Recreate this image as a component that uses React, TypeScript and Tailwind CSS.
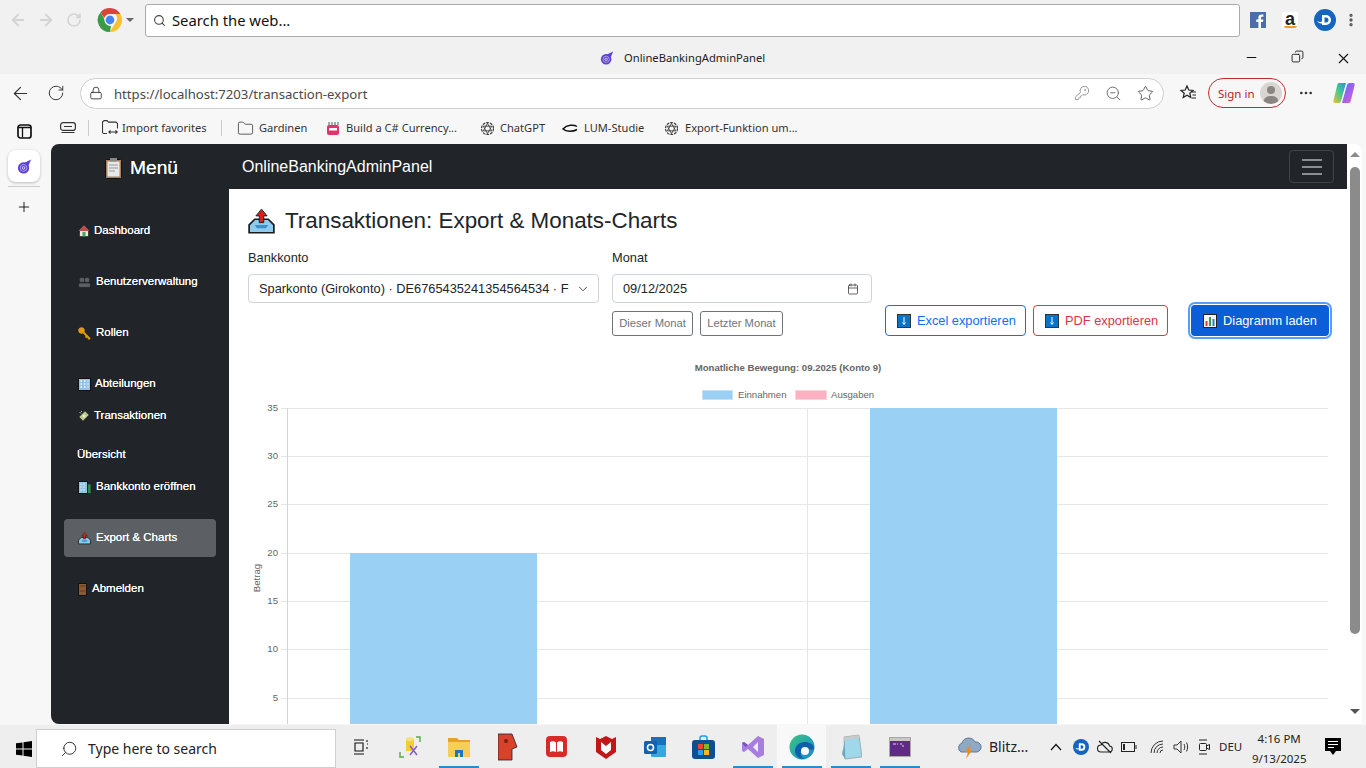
import {
  ArrowLeft,
  ArrowRight,
  Calendar,
  ChevronDown,
  Copy,
  Folder,
  KeyRound,
  Lock,
  Minus,
  MoreHorizontal,
  Plus,
  RotateCw,
  Search,
  Star,
  X,
  ZoomOut,
} from "lucide-react";
import type { ReactNode } from "react";

const segoe = "font-['Noto_Sans','Open_Sans',sans-serif]";

function ChromeLogo() {
  return (
    <svg width="26" height="26" viewBox="0 0 26 26">
      <path d="M13 1a12 12 0 0 1 10.4 6H13a6 6 0 0 0-5.7 4L3.6 5.2A12 12 0 0 1 13 1z" fill="#db4437" />
      <path d="M23.4 7A12 12 0 0 1 13 25l5.2-9a6 6 0 0 0 0-9z" fill="#fbc02d" />
      <path d="M13 25A12 12 0 0 1 3.6 5.2L8 13a6 6 0 0 0 6 6z" fill="#3c9a47" />
      <circle cx="13" cy="13" r="5.6" fill="#fff" />
      <circle cx="13" cy="13" r="4.4" fill="#4285f4" />
    </svg>
  );
}

function DashlaneLogo({ size }: { size: number }) {
  return (
    <svg width={size} height={size} viewBox="0 0 22 22">
      <circle cx="11" cy="11" r="11" fill="#1565c0" />
      <path d="M8 6h4a5 5 0 0 1 0 10H8z" fill="#fff" />
      <path d="M10.500 8.500h1.500a2.500 2.500 0 0 1 0 5h-1.500z" fill="#1565c0" />
      <path d="M3 12q3 1.500 5 .5v2q-3 .5-5-2.500z" fill="#fff" />
    </svg>
  );
}

function SwirlLogo({ size }: { size: number }) {
  return (
    <svg width={size} height={size} viewBox="0 0 16 16">
      <circle cx="7" cy="9.500" r="6" fill="#5b3fd6" />
      <path d="M8 4l7-3.500-3 7z" fill="#5b3fd6" />
      <circle cx="7" cy="9.500" r="3.600" fill="none" stroke="#c9bdf5" strokeWidth="0.800" />
      <circle cx="7" cy="9.500" r="1.400" fill="none" stroke="#fff" strokeWidth="0.800" />
    </svg>
  );
}

function CopilotLogo() {
  return (
    <svg width="24" height="24" viewBox="0 0 24 24">
      <defs>
        <linearGradient id="copA" x1="0" y1="1" x2="1" y2="0">
          <stop offset="0" stopColor="#f5c02e" />
          <stop offset="0.5" stopColor="#46c98c" />
          <stop offset="1" stopColor="#2b8ff0" />
        </linearGradient>
        <linearGradient id="copB" x1="0" y1="0" x2="1" y2="1">
          <stop offset="0" stopColor="#3f7df0" />
          <stop offset="0.6" stopColor="#b35ce8" />
          <stop offset="1" stopColor="#f06ba8" />
        </linearGradient>
      </defs>
      <path d="M7 2h7L9 20c-.5 1.500-1.500 2-3 2H3c-1.500 0-2-1-1.500-2.500L5 5c.4-2 1-3 2-3z" fill="url(#copA)" />
      <path d="M17 22h-7l5-18c.5-1.500 1.500-2 3-2h3c1.500 0 2 1 1.500 2.500L19 19c-.4 2-1 3-2 3z" fill="url(#copB)" />
    </svg>
  );
}

function GptIcon() {
  return (
    <svg width="15" height="15" viewBox="0 0 16 16" fill="none" stroke="#333" strokeWidth="1.200">
      <circle cx="8" cy="8" r="6.400" strokeDasharray="3 1" />
      <path d="M8 2.500l4.500 8H3.500zM8 13.500l-4.500-8h9z" strokeWidth="0.900" />
    </svg>
  );
}

function ExportTray({ size }: { size: number }) {
  return (
    <svg width={size} height={size} viewBox="0 0 24 24">
      <path d="M1 15l5-5h12l5 5v7H1z" fill="#8ecbee" stroke="#1a1a1a" strokeWidth="1.500" />
      <path d="M6 15h12l-2 3H8z" fill="#3d90c9" />
      <path d="M12 1l5 6h-3v6h-4V7H7z" fill="#d9201f" stroke="#1a1a1a" strokeWidth="0.800" />
    </svg>
  );
}

function ClipboardIcon() {
  return (
    <svg width="17" height="21" viewBox="0 0 17 21">
      <rect x="0.500" y="1.500" width="16" height="19" rx="1" fill="#a9805c" stroke="#111" />
      <rect x="2.500" y="3.500" width="12" height="15" fill="#e8e8e8" />
      <rect x="5" y="0" width="7" height="3.500" fill="#888" />
      <path d="M4 7h9M4 10h9M4 13h6" stroke="#999" />
    </svg>
  );
}

function HomeIcon() {
  return (
    <svg width="12" height="12" viewBox="0 0 12 12">
      <path d="M6 0.500L11.500 6H10.500v5.500h-9V6H0.500z" fill="#f0e6dc" stroke="#111" strokeWidth="0.600" />
      <path d="M6 0.500L11.500 6h-11z" fill="#c24a4a" />
      <rect x="4.500" y="7" width="3" height="4.500" fill="#3aa66b" />
    </svg>
  );
}

function PeopleIcon() {
  return (
    <svg width="13" height="12" viewBox="0 0 13 12">
      <circle cx="4" cy="4" r="2.800" fill="#5a5f64" stroke="#111" strokeWidth="0.500" />
      <circle cx="9" cy="4" r="2.800" fill="#5a5f64" stroke="#111" strokeWidth="0.500" />
      <rect x="0.500" y="7" width="12" height="4.500" rx="1.500" fill="#5a5f64" stroke="#111" strokeWidth="0.500" />
    </svg>
  );
}

function KeyIcon() {
  return (
    <svg width="13" height="13" viewBox="0 0 13 13">
      <circle cx="3.500" cy="3.500" r="2.800" fill="#e39a12" stroke="#e39a12" strokeWidth="1" />
      <path d="M5.500 5.500L12 12M9 9l-1.500 1.500M11 11l-1 1" stroke="#e39a12" strokeWidth="1.800" />
    </svg>
  );
}

function BuildingIcon({ green }: { green?: boolean }) {
  return (
    <svg width="13" height="13" viewBox="0 0 13 13">
      <rect x="0.500" y="0.500" width={green ? 9 : 12} height="12" fill="#8fc6e8" stroke="#111" />
      <path d={green ? "M2.500 3h1M5.500 3h1M2.500 6h1M5.500 6h1M2.500 9h1M5.500 9h1" : "M2.500 3h1.500M6 3h1.500M9.500 3h1M2.500 6h1.500M6 6h1.500M9.500 6h1M2.500 9h1.500M6 9h1.500M9.500 9h1"} stroke="#f5f5f5" strokeWidth="1.500" />
      {green && <rect x="9.500" y="3" width="3.500" height="9.500" fill="#2e8b45" stroke="#111" strokeWidth="0.500" />}
    </svg>
  );
}

function MoneyIcon() {
  return (
    <svg width="12" height="12" viewBox="0 0 12 12">
      <path d="M1 7l6-6 4 4-6 6z" fill="#b9c488" stroke="#333" strokeWidth="0.600" />
      <circle cx="6" cy="6" r="1.500" fill="#eef0c8" />
      <path d="M1.500 2l1.500 1.500M3 1l1 1" stroke="#eee" strokeWidth="0.800" />
    </svg>
  );
}

function DoorIcon() {
  return (
    <svg width="9" height="13" viewBox="0 0 9 13">
      <rect x="0.500" y="0.500" width="8" height="12" fill="#8a5a34" stroke="#111" />
      <path d="M2 3h5M2 8h5" stroke="#5f3a1d" />
    </svg>
  );
}

function DownloadBadge() {
  return (
    <svg width="14" height="14" viewBox="0 0 14 14">
      <rect x="0.500" y="0.500" width="13" height="13" fill="#0574c9" stroke="#333" />
      <path d="M7 3v7M5.500 8.500L7 10.500l1.500-2" stroke="#fff" fill="none" />
    </svg>
  );
}

function BarsBadge() {
  return (
    <svg width="14" height="14" viewBox="0 0 14 14">
      <rect x="0.500" y="0.500" width="13" height="13" fill="#f4f4f4" stroke="#222" />
      <rect x="2.500" y="7" width="2" height="5" fill="#d9452f" />
      <rect x="6" y="3" width="2" height="9" fill="#3a9a4a" />
      <rect x="9.500" y="5" width="2" height="7" fill="#2f78c9" />
    </svg>
  );
}

function NavItem({ icon, iconWidth, label, active, short, gap = true }: { icon: ReactNode; iconWidth: number; label: string; active?: boolean; short?: boolean; gap?: boolean }) {
  return (
    <a
      href="#"
      className={`mx-[13px] flex items-center rounded pl-[14px] text-[11.500px] text-white [text-shadow:0_0_0.6px_#fff] ${short ? "h-[26px]" : "h-[38px]"} ${gap ? "mt-[13px]" : ""} ${active ? "bg-[#5c6065]" : ""}`}
    >
      <span className="flex shrink-0 items-center" style={{ width: iconWidth }}>
        {icon}
      </span>
      {label}
    </a>
  );
}

function Favorite({ icon, label, width, gap }: { icon: ReactNode; label: string; width: number; gap: number }) {
  return (
    <div className="flex shrink-0 items-center" style={{ width }}>
      <span className="flex w-[20px] shrink-0 items-center justify-center">{icon}</span>
      <span className="whitespace-nowrap" style={{ marginLeft: gap }}>
        {label}
      </span>
    </div>
  );
}

function Slot({ children, line, active }: { children?: ReactNode; line?: boolean; active?: boolean }) {
  return (
    <div className={`relative flex h-full w-[49px] shrink-0 items-center justify-center ${active ? "bg-[#f8f8f8]" : ""}`}>
      {children}
      {line && <span className="absolute bottom-0 left-[5px] h-[2px] w-[40px] bg-[#2a8ccb]" />}
    </div>
  );
}

function Chart() {
  const ticks = [
    { v: 35, y: 408 },
    { v: 30, y: 456 },
    { v: 25, y: 504.5 },
    { v: 20, y: 553 },
    { v: 15, y: 601 },
    { v: 10, y: 649 },
    { v: 5, y: 698 },
  ];
  return (
    <svg width="1084" height="375" viewBox="248 355 1084 375" className="mt-[17px] block shrink-0 font-['Liberation_Sans',Arial,sans-serif]">
      <text x="788" y="371" textAnchor="middle" fontSize="9.6" fontWeight="700" fill="#666">
        Monatliche Bewegung: 09.2025 (Konto 9)
      </text>
      <rect x="702.500" y="390.500" width="30" height="9" fill="#9bd0f5" stroke="#c4e3f9" />
      <text x="738" y="398" fontSize="9.6" fill="#666">Einnahmen</text>
      <rect x="795.500" y="390.500" width="31" height="9" fill="#ffb1c1" stroke="#ffd3dc" />
      <text x="831" y="398" fontSize="9.6" fill="#666">Ausgaben</text>
      {ticks.map((t) => (
        <g key={t.v}>
          <line x1="281" x2="1328" y1={Math.floor(t.y) + 0.5} y2={Math.floor(t.y) + 0.5} stroke="#e6e6e6" />
          <text x="278" y={t.y + 2.5} textAnchor="end" fontSize="9.6" fill="#666">
            {t.v}
          </text>
        </g>
      ))}
      <line x1="287.500" x2="287.500" y1="408" y2="730" stroke="#d4d4d4" />
      <line x1="807.500" x2="807.500" y1="408" y2="730" stroke="#e6e6e6" />
      <rect x="350" y="553" width="187" height="180" fill="#9bd0f5" />
      <rect x="870" y="408" width="187" height="325" fill="#9bd0f5" />
      <text x="0" y="0" transform="translate(260 578) rotate(-90)" textAnchor="middle" fontSize="9.6" fill="#666">
        Betrag
      </text>
    </svg>
  );
}

export default function App() {
  return (
    <div className="flex h-[768px] w-[1366px] flex-col overflow-hidden bg-[#f7f7f7] font-['Liberation_Sans',Arial,sans-serif] text-[#212529]">
      {/* Launcher bar */}
      <div className="flex h-[74px] shrink-0 flex-col bg-[#f1f1f1]">
        <div className="flex h-[40px] items-center">
          <div className="flex w-[97px] items-center pl-[9px] text-[#d3d3d3]">
            <ArrowLeft size={18} strokeWidth={2.4} />
            <ArrowRight size={18} strokeWidth={2.4} className="ml-[10px]" />
            <RotateCw size={16} strokeWidth={2.4} className="ml-[11px]" />
          </div>
          <ChromeLogo />
          <span className="ml-[3px] mr-[11px] h-0 w-0 border-x-[4px] border-t-[4px] border-x-transparent border-t-[#666]" />
          <div className={`flex h-[33px] w-[1095px] items-center rounded-[3px] border border-[#aaa] bg-white pl-[7px] text-[14.800px] text-[#111] ${segoe}`}>
            <Search size={13} strokeWidth={2} className="text-[#444]" />
            <span className="ml-[6px]">Search the web...</span>
          </div>
          <svg width="16" height="16" viewBox="0 0 16 16" className="ml-[10px]">
            <rect width="16" height="16" fill="#4b6ea9" />
            <path d="M11 16v-6h2l.4-2.500H11V6c0-.8.3-1.200 1.200-1.200h1.200V2.600C13 2.500 12.200 2.500 11.500 2.500 9.600 2.500 8.400 3.600 8.400 5.700v1.800H6.300V10h2.100v6z" fill="#fff" />
          </svg>
          <div className="ml-[16px] flex h-[16px] w-[16px] flex-col items-center bg-white leading-none">
            <span className="text-[18px] font-bold leading-[14px] text-[#222]">a</span>
            <span className="h-[2px] w-[13px] rounded-b-full bg-[#f29d1f]" />
          </div>
          <span className="ml-[16px] flex">
            <DashlaneLogo size={22} />
          </span>
          <MoreHorizontal size={16} strokeWidth={3} className="ml-[7px] rotate-90 text-[#555]" />
        </div>
        <div className={`flex h-[34px] items-center pt-[2px] text-[11.200px] text-[#222] ${segoe}`}>
          <span className="ml-[600px] flex">
            <SwirlLogo size={14} />
          </span>
          <span className="ml-[10px]">OnlineBankingAdminPanel</span>
          <div className="ml-auto flex text-[#111]">
            <span className="flex w-[46px] justify-center">
              <Minus size={15} strokeWidth={1.600} />
            </span>
            <span className="flex w-[46px] justify-center">
              <Copy size={13} strokeWidth={1.600} className="scale-x-[-1]" />
            </span>
            <span className="flex w-[46px] justify-center">
              <X size={17} strokeWidth={1.500} />
            </span>
          </div>
        </div>
      </div>

      {/* Edge toolbar */}
      <div className={`flex h-[38px] shrink-0 items-center text-[#333] ${segoe}`}>
        <ArrowLeft size={21} strokeWidth={1.300} className="ml-[10px]" />
        <RotateCw size={18} strokeWidth={1.300} className="ml-[16px]" />
        <div className="ml-[15px] flex h-[31px] w-[1084px] items-center rounded-full border border-[#cfcfcf] bg-white pl-[8px]">
          <Lock size={14} strokeWidth={1.500} />
          <span className="ml-[11px] pt-[3px] text-[13.150px] text-[#4a4a4a]">https://localhost:7203/transaction-export</span>
          <KeyRound size={16} strokeWidth={1.300} className="ml-auto text-[#888]" />
          <ZoomOut size={17} strokeWidth={1.300} className="ml-[15px] text-[#666]" />
          <Star size={17} strokeWidth={1.300} className="ml-[15px] mr-[9px] text-[#555]" />
        </div>
        <svg width="18" height="18" viewBox="0 0 18 18" fill="none" stroke="#222" strokeWidth="1.200" className="ml-[15px]">
          <path d="M8 2l1.800 4 4.200.4-3.200 2.800 1 4.300L8 11.300l-3.800 2.200 1-4.300L2 6.400l4.200-.4z" />
          <path d="M13 8h4M13.500 11h3.500M13 14h4" />
        </svg>
        <div className="ml-[11px] flex h-[30px] w-[78px] items-center rounded-full border border-[#c42b2b] pl-[9px] text-[11.500px] text-[#b91c1c]">
          <span className="pt-[1px]">Sign in</span>
          <svg width="22" height="22" viewBox="0 0 22 22" className="ml-auto mr-[3px]">
            <circle cx="11" cy="11" r="11" fill="#d9d6d2" />
            <circle cx="11" cy="8" r="4" fill="#8a8580" />
            <path d="M3.500 19c1-4 4-5 7.500-5s6.500 1 7.500 5a11 11 0 0 1-15 0z" fill="#8a8580" />
          </svg>
        </div>
        <MoreHorizontal size={16} strokeWidth={2} className="ml-[12px]" />
        <span className="ml-[18px] flex">
          <CopilotLogo />
        </span>
      </div>

      <div className="flex min-h-0 flex-1">
        {/* Edge vertical tab rail */}
        <div className="flex w-[51px] shrink-0 flex-col items-center pr-[3px]">
          <svg width="15" height="15" viewBox="0 0 15 15" fill="none" stroke="#111" strokeWidth="1.700" className="mt-[12px]">
            <rect x="1" y="1" width="13" height="13" rx="2.500" />
            <path d="M1 3.500h13M5.500 3.500v10" strokeWidth="1.300" />
          </svg>
          <div className="mt-[11px] flex h-[32px] w-[32px] items-center justify-center rounded-lg bg-white shadow-[0_1px_3px_rgba(0,0,0,0.25)]">
            <SwirlLogo size={15} />
          </div>
          <span className="mt-[4px] h-px w-[32px] bg-[#ccc]" />
          <Plus size={16} strokeWidth={1.400} className="mt-[12px] text-[#111]" />
        </div>

        <div className="flex min-w-0 flex-1 flex-col">
          {/* Favorites bar */}
          <div className={`flex h-[32px] shrink-0 items-center text-[11.100px] text-[#333] ${segoe}`}>
            <svg width="16" height="12" viewBox="0 0 16 12" fill="none" stroke="#333" strokeWidth="1.200" className="ml-[9px]">
              <rect x="0.600" y="0.600" width="14.800" height="7.800" rx="2.500" />
              <path d="M4 4.500h8M1.500 10.500h13" />
            </svg>
            <span className="ml-[12px] h-[16px] w-px bg-[#ccc]" />
            <div className="ml-[11px] w-[121px]">
              <Favorite
                width={121}
                gap={2}
                label="Import favorites"
                icon={
                  <svg width="16" height="15" viewBox="0 0 16 15" fill="none" stroke="#333" strokeWidth="1.100">
                    <path d="M5 13.500H2a1.500 1.500 0 0 1-1.500-1.500V2L2 .6h3l1.500 1.500h7.500L15.500 3.500v5M7 12h8M8.500 10.300L6.800 12l1.700 1.700M13.500 10.300l1.700 1.700-1.700 1.700" />
                  </svg>
                }
              />
            </div>
            <span className="h-[16px] w-px bg-[#ccc]" />
            <div className="ml-[13px] flex">
              <Favorite width={88} gap={4} label="Gardinen" icon={<Folder size={17} strokeWidth={1.100} />} />
              <Favorite
                width={154}
                gap={3}
                label="Build a C# Currency..."
                icon={
                  <svg width="14" height="15" viewBox="0 0 14 15">
                    <rect x="1" y="4" width="12" height="10" rx="2" fill="#e0356a" />
                    <path d="M3 1v3M6 1v3M9 1v3M12 1v3" stroke="#555" />
                    <rect x="3" y="7" width="8" height="2.500" fill="#fff" />
                  </svg>
                }
              />
              <Favorite width={83} gap={3} label="ChatGPT" icon={<GptIcon />} />
              <Favorite
                width={101}
                gap={4}
                label="LUM-Studie"
                icon={
                  <svg width="16" height="9" viewBox="0 0 16 9" fill="none" stroke="#111" strokeWidth="1.500">
                    <path d="M15 2.500C12 .500 5 .500 1 5c3 3 10 3 14 .5" />
                  </svg>
                }
              />
              <Favorite width={140} gap={4} label="Export-Funktion um..." icon={<GptIcon />} />
            </div>
          </div>

          {/* Browser viewport */}
          <div className="flex h-[580px] shrink-0 pr-[4px]">
            <div className="flex w-[178px] shrink-0 flex-col rounded-l-lg bg-[#212529]">
              <div className="flex h-[48px] items-center justify-center pl-[3px] pt-[1px] text-[19.200px] text-white [text-shadow:0_0_0.6px_#fff]">
                <ClipboardIcon />
                <span className="ml-[8px]">Menü</span>
              </div>
              <div className="mt-[7px]">
                <NavItem icon={<HomeIcon />} iconWidth={16} label="Dashboard" />
                <NavItem icon={<PeopleIcon />} iconWidth={18} label="Benutzerverwaltung" />
                <NavItem icon={<KeyIcon />} iconWidth={18} label="Rollen" />
                <NavItem icon={<BuildingIcon />} iconWidth={17} label="Abteilungen" />
                <NavItem icon={<MoneyIcon />} iconWidth={16} label="Transaktionen" short gap={false} />
                <div className="ml-[26px] mt-[13px] flex h-[26px] items-center text-[11.500px] text-white [text-shadow:0_0_0.6px_#fff]">Übersicht</div>
                <NavItem icon={<BuildingIcon green />} iconWidth={18} label="Bankkonto eröffnen" gap={false} />
                <NavItem icon={<ExportTray size={13} />} iconWidth={18} label="Export & Charts" active />
                <NavItem icon={<DoorIcon />} iconWidth={14} label="Abmelden" />
              </div>
            </div>

            <div className="flex min-w-0 flex-1 flex-col overflow-hidden bg-white">
              <div className="flex h-[45px] shrink-0 items-center justify-between bg-[#212529] pl-[13px] pr-[13px]">
                <span className="text-[16px] text-white">OnlineBankingAdminPanel</span>
                <span className="flex h-[33px] w-[45px] flex-col items-center justify-center gap-[5px] rounded border border-[#40444a]">
                  <span className="h-[2px] w-[20px] bg-[#8b8e91]" />
                  <span className="h-[2px] w-[20px] bg-[#8b8e91]" />
                  <span className="h-[2px] w-[20px] bg-[#8b8e91]" />
                </span>
              </div>

              <div className="flex min-h-0 flex-1 flex-col pl-[19px]">
                <h1 className="mt-[17px] flex h-[30px] items-center text-[22.400px] font-normal text-[#212529]">
                  <ExportTray size={27} />
                  <span className="ml-[10px]">Transaktionen: Export &amp; Monats-Charts</span>
                </h1>

                <div className="mt-[14px] flex h-[88px] shrink-0 items-end text-[12.800px]">
                  <div className="h-full w-[351px] shrink-0">
                    <div className="h-[24px] leading-[16px]">Bankkonto</div>
                    <div className="flex h-[29px] items-center rounded border border-[#ced4da] pl-[10px] pr-[8px]">
                      <span className="w-[310px] shrink-0 overflow-hidden whitespace-nowrap">Sparkonto (Girokonto) · DE6765435241354564534 · Fi</span>
                      <ChevronDown size={14} strokeWidth={1.500} className="ml-auto text-[#343a40]" />
                    </div>
                  </div>
                  <div className="ml-[13px] h-full w-[260px] shrink-0">
                    <div className="h-[24px] leading-[16px]">Monat</div>
                    <div className="flex h-[29px] items-center rounded border border-[#ced4da] pl-[10px] pr-[12px]">
                      09/12/2025
                      <Calendar size={12} strokeWidth={1.500} className="ml-auto text-[#333]" />
                    </div>
                    <div className="mt-[8px] flex gap-[7px] text-[11.200px] text-[#6c757d]">
                      <span className="flex h-[25px] w-[81px] items-center justify-center rounded-[3px] border border-[#6c757d]">Dieser Monat</span>
                      <span className="flex h-[25px] w-[83px] items-center justify-center rounded-[3px] border border-[#6c757d]">Letzter Monat</span>
                    </div>
                  </div>
                  <div className="ml-[13px] flex w-[445px] items-center pb-[2px]">
                    <button className="flex h-[31px] w-[141px] items-center gap-[6px] rounded border border-[#0d6efd] pl-[11px] text-[#0d6efd]">
                      <DownloadBadge />
                      Excel exportieren
                    </button>
                    <button className="ml-[7px] flex h-[31px] w-[135px] items-center gap-[6px] rounded border border-[#dc3545] pl-[11px] text-[#dc3545]">
                      <DownloadBadge />
                      PDF exportieren
                    </button>
                    <button className="ml-[23px] flex h-[31px] w-[138px] items-center justify-center gap-[6px] rounded bg-[#0b5ed7] text-white shadow-[0_0_0_1px_#fff,0_0_0_3px_#5a9df8]">
                      <BarsBadge />
                      Diagramm laden
                    </button>
                  </div>
                </div>

                <Chart />
              </div>
            </div>

            {/* Page scrollbar */}
            <div className="flex w-[15px] shrink-0 flex-col items-center rounded-tr-lg bg-white">
              <span className="mt-[8px] h-0 w-0 border-x-[5px] border-b-[5px] border-x-transparent border-b-[#8b8b8b]" />
              <span className="mt-[10px] h-[467px] w-[10px] rounded-full bg-[#8b8b8b]" />
              <span className="mt-[75px] h-0 w-0 border-x-[5px] border-t-[5px] border-x-transparent border-t-[#555]" />
            </div>
          </div>
        </div>
      </div>

      {/* Windows taskbar */}
      <div className={`flex h-[43px] shrink-0 items-end bg-[#eeeeee] ${segoe}`}>
        <div className="flex h-[39px] w-[48px] shrink-0 items-center justify-center">
          <svg width="16" height="16" viewBox="0 0 16 16" fill="#000">
            <path d="M0 2.300L6.500 1.400V7.500H0zM7.500 1.300L16 0V7.500H7.500zM0 8.500H6.500V14.600L0 13.700zM7.500 8.500H16V16L7.500 14.700z" />
          </svg>
        </div>
        <div className="-ml-[12px] flex h-[39px] w-[300px] shrink-0 items-center border border-[#cfcfcf] bg-white pl-[23px] text-[14px] text-[#222]">
          <Search size={18} strokeWidth={1.200} className="scale-x-[-1]" />
          <span className="ml-[10px]">Type here to search</span>
        </div>
        <div className="flex h-[43px] shrink-0 items-center">
          <Slot>
            <svg width="16" height="16" viewBox="0 0 16 16" fill="none" stroke="#111" strokeWidth="1.100">
              <path d="M1 1h10M1 15h10M2 4h8v8H2zM14 1v2M14 5h1M14 8v2" />
            </svg>
          </Slot>
          <Slot>
            <svg width="22" height="22" viewBox="0 0 22 22">
              <path d="M7 3h8v12H7z" fill="#f1cf2f" />
              <ellipse cx="11" cy="3" rx="4" ry="2" fill="#f5e27a" />
              <path d="M11 10l7 9M18 10l-7 9" stroke="#8a60c9" strokeWidth="1.600" />
              <path d="M1 16v5h4M21 6V1h-4" fill="none" stroke="#58a94a" strokeWidth="1.400" />
            </svg>
          </Slot>
          <Slot line>
            <svg width="22" height="20" viewBox="0 0 22 20">
              <path d="M0 1h9l2 2h11v4H0z" fill="#e0a42a" />
              <path d="M0 5h22v15H0z" fill="#f8cf56" />
              <path d="M7 13h8v7H7z" fill="#1a78c2" />
              <path d="M10 16h2v4h-2z" fill="#f8cf56" />
            </svg>
          </Slot>
          <Slot>
            <svg width="20" height="28" viewBox="0 0 20 28">
              <path d="M0 1h14l5 13-5 2v11H0z" fill="#d9412a" stroke="#222" strokeWidth="0.800" />
              <circle cx="8" cy="8" r="2" fill="#7a2010" />
            </svg>
          </Slot>
          <Slot>
            <svg width="21" height="21" viewBox="0 0 21 21">
              <rect width="21" height="21" rx="4" fill="#d92a2a" />
              <path d="M4 6c2-1 4-1 6 .5V16c-2-1-4-1-6 0zM17 6c-2-1-4-1-6 .5V16c2-1 4-1 6 0z" fill="#fff" />
            </svg>
          </Slot>
          <Slot>
            <svg width="20" height="24" viewBox="0 0 20 24">
              <path d="M0 2l4 2 6-3 6 3 4-2v15l-10 7-10-7z" fill="#c01818" />
              <path d="M5 7l5 4 5-4v8l-5 4-5-4z" fill="#fff" />
            </svg>
          </Slot>
          <Slot>
            <svg width="24" height="22" viewBox="0 0 24 22">
              <rect x="8" y="1" width="15" height="20" rx="1" fill="#35a8e0" />
              <path d="M8 1h15v8H8z" fill="#1a6fbf" />
              <rect x="1" y="5" width="13" height="13" rx="1.500" fill="#0f62b0" />
              <circle cx="7.500" cy="11.500" r="3" fill="none" stroke="#fff" strokeWidth="1.600" />
            </svg>
          </Slot>
          <Slot>
            <svg width="23" height="24" viewBox="0 0 23 24">
              <path d="M8 6V3a2 2 0 0 1 2-2h3a2 2 0 0 1 2 2v3" fill="none" stroke="#1e9ee6" strokeWidth="1.500" />
              <rect y="5" width="23" height="19" rx="3" fill="#0f4f8f" />
              <rect x="6" y="9" width="5" height="5" fill="#e8492c" />
              <rect x="12" y="9" width="5" height="5" fill="#7ab82e" />
              <rect x="6" y="15" width="5" height="5" fill="#2a9df0" />
              <rect x="12" y="15" width="5" height="5" fill="#f6b91c" />
            </svg>
          </Slot>
          <Slot line>
            <svg width="24" height="24" viewBox="0 0 24 24">
              <path d="M17 1l6 3v16l-6 3L7 14l-4 3-2-1V8l2-1 4 3z" fill="#a77de0" />
              <path d="M17 7l-5 5 5 5z" fill="#eeeeee" />
              <path d="M1 8l2-1 4 3-2.500 2z" fill="#7d4fc4" />
            </svg>
          </Slot>
          <Slot line active>
            <svg width="26" height="26" viewBox="0 0 26 26">
              <defs>
                <linearGradient id="edgeA" x1="0" y1="0" x2="1" y2="1">
                  <stop offset="0" stopColor="#3bc77e" />
                  <stop offset="1" stopColor="#1584d8" />
                </linearGradient>
              </defs>
              <circle cx="13" cy="13" r="12.500" fill="url(#edgeA)" />
              <path d="M25 15c0-5-5-7-9-7-6 0-10 4-10 9 0 4 4 8 9 8-3-2-4-5-3-8 1-2 4-3 7-2 3 1 5 1 6 0z" fill="#0d5fb0" />
              <circle cx="16" cy="17" r="4" fill="#f8f8f8" />
            </svg>
          </Slot>
          <Slot line>
            <svg width="22" height="26" viewBox="0 0 22 26">
              <path d="M4 3l15-2 3 22-17 2z" fill="#9fd8ea" stroke="#8a8a8a" strokeWidth="0.600" />
              <path d="M4 3l15-2 .5 3-15 2z" fill="#c9c9c9" />
              <path d="M2 20l3-14v19z" fill="#6ba9c4" />
            </svg>
          </Slot>
          <Slot line>
            <svg width="22" height="22" viewBox="0 0 22 22">
              <rect x="0.500" y="1.500" width="21" height="19" fill="#5e2a86" stroke="#a8a8a8" />
              <rect x="1" y="2" width="20" height="3" fill="#c8c8c8" />
              <path d="M4 8h3M8 8h1M11 8h2M13 10h2" stroke="#ddd" />
            </svg>
          </Slot>
        </div>
        <div className="ml-[32px] flex h-[43px] min-w-0 flex-1 items-center text-[#222]">
          <svg width="26" height="24" viewBox="0 0 26 24">
            <path d="M5 17a5 5 0 0 1 1-9 7 7 0 0 1 13-1 5 5 0 0 1 2 10z" fill="#8fa8c4" stroke="#5f7a98" />
            <path d="M14 10l-5 7h3l-2 7 6-9h-3l2-5z" fill="#ee8a14" />
          </svg>
          <span className="ml-[7px] w-[53px] text-[14px]">Blitz...</span>
          <svg width="12" height="8" viewBox="0 0 12 8" fill="none" stroke="#111" strokeWidth="1.200" className="ml-[8px]">
            <path d="M1 7l5-5.500L11 7" />
          </svg>
          <span className="ml-[11px] flex">
            <DashlaneLogo size={16} />
          </span>
          <svg width="16" height="16" viewBox="0 0 16 16" fill="none" stroke="#222" strokeWidth="1.100" className="ml-[8px]">
            <path d="M4 13h8a3 3 0 0 0 .5-6A4.500 4.500 0 0 0 4 6a3.500 3.500 0 0 0 0 7zM2 2l12 12" />
          </svg>
          <svg width="16" height="10" viewBox="0 0 16 10" fill="none" stroke="#222" className="ml-[8px]">
            <rect x="0.500" y="0.500" width="13" height="9" />
            <path d="M15 3v4" />
            <rect x="2" y="2" width="2" height="6" fill="#222" stroke="none" />
          </svg>
          <svg width="16" height="14" viewBox="0 0 16 14" fill="none" stroke="#333" className="ml-[13px]">
            <path d="M1 13A12 12 0 0 1 13 1M4 13a9 9 0 0 1 9-9M7 13a6 6 0 0 1 6-6M10 13a3 3 0 0 1 3-3" />
          </svg>
          <svg width="16" height="14" viewBox="0 0 16 14" fill="none" stroke="#333" className="ml-[7px]">
            <path d="M1 5h3l4-4v12l-4-4H1zM11 4c1 2 1 4 0 6M13.500 2.500c1.500 3 1.500 6 0 9" />
          </svg>
          <svg width="14" height="18" viewBox="0 0 14 18" fill="none" stroke="#222" className="ml-[8px]">
            <rect x="2.500" y="5.500" width="7" height="7" rx="1" />
            <path d="M9.500 8l3-1.500v5L9.500 10M2 2h8M2 16h8" />
          </svg>
          <span className="ml-[8px] text-[11.500px]">DEU</span>
          <div className="ml-[2px] flex w-[70px] flex-col items-center pt-[4px] text-[11.500px] leading-[20px]">
            <span>4:16 PM</span>
            <span>9/13/2025</span>
          </div>
          <svg width="16" height="17" viewBox="0 0 16 17" className="ml-[11px]">
            <path d="M0 0h16v13h-5l-3 4-3-4H0z" fill="#000" />
            <path d="M3 3.500h10M3 6.500h10M3 9.500h6" stroke="#fff" />
          </svg>
        </div>
      </div>
    </div>
  );
}
